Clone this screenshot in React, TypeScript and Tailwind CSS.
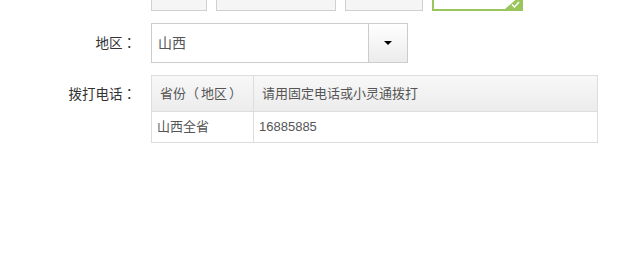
export default function App() {
  return (
    <div className="w-[626px] h-[273px] bg-white overflow-hidden font-['Liberation_Sans','Noto_Sans_CJK_SC',sans-serif] text-[#333]">
      {/* top choices, cut off by the window */}
      <div className="flex -mt-[22px]">
        <div className="w-[136px]" />
        <div className="ml-[15px] flex gap-[9px]">
          <div className="w-[56px] h-[33px] bg-[#f5f5f5] border border-[#d0d0d0]" />
          <div className="w-[120px] h-[33px] bg-[#f5f5f5] border border-[#d0d0d0]" />
          <div className="w-[78px] h-[33px] bg-[#f5f5f5] border border-[#d0d0d0]" />
          <div className="relative w-[91px] h-[33px] bg-white border-2 border-[#9ac45c] overflow-hidden">
            <div className="absolute right-0 bottom-0 w-0 h-0 border-l-[16px] border-l-transparent border-b-[14px] border-b-[#9ac45c]" />
            <svg className="absolute right-[1px] bottom-[1px]" width="9" height="7" viewBox="0 0 9 7">
              <path d="M1 3.5 L3.5 6 L8 1" stroke="#fff" strokeWidth="1.4" fill="none" />
            </svg>
          </div>
        </div>
      </div>

      {/* 地区 */}
      <div className="flex items-center mt-[12px]">
        <div className="w-[136px] text-right text-[13.5px]">
          地区<span className="font-['Noto_Sans_CJK_JP',sans-serif]">：</span>
        </div>
        <div className="ml-[15px] flex w-[257px] h-[40px] border border-[#ccc]">
          <div className="flex-1 flex items-center pl-[6px] text-[14px] text-[#555]">山西</div>
          <div className="w-[39px] flex items-center justify-center border-l border-[#ccc] bg-gradient-to-b from-white to-[#ececec]">
            <div className="w-0 h-0 border-l-[4px] border-r-[4px] border-t-[4px] border-l-transparent border-r-transparent border-t-black" />
          </div>
        </div>
      </div>

      {/* 拨打电话 */}
      <div className="flex items-start mt-[12px]">
        <div className="w-[136px] text-right text-[13.5px] leading-[37px]">
          拨打电话<span className="font-['Noto_Sans_CJK_JP',sans-serif]">：</span>
        </div>
        <div className="ml-[15px] w-[447px] border border-[#ddd] text-[13px] text-[#555]">
          <div className="flex h-[36px] bg-gradient-to-b from-[#f8f8f8] to-[#ececec] border-b border-[#ddd]">
            <div className="w-[102px] flex items-center pl-[8px] border-r border-[#ddd]">
              省份<span className="mr-[2px]">（</span>地区<span className="ml-[2px]">）</span>
            </div>
            <div className="flex-1 flex items-center pl-[8px]">请用固定电话或小灵通拨打</div>
          </div>
          <div className="flex h-[30px]">
            <div className="w-[102px] flex items-center pl-[5px] border-r border-[#ddd]">山西全省</div>
            <div className="flex-1 flex items-center pl-[5px]">16885885</div>
          </div>
        </div>
      </div>
    </div>
  );
}
